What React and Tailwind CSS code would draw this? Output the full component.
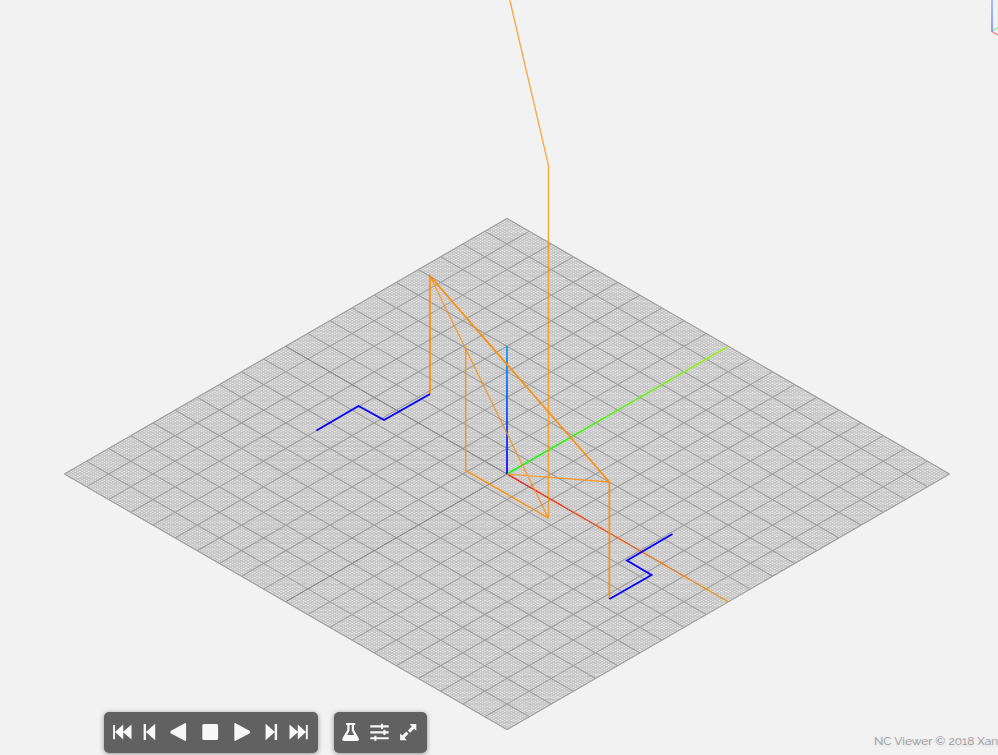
import React from "react";

const CX = 507;
const CY = 474;
const HALF_W = 442.5;
const HALF_H = 255.5;

// Isometric projection: x and y run from -1 to 1 across the work plane.
const project = (x, y) =>
  `${(CX + ((x + y) * HALF_W) / 2).toFixed(2)} ${(CY + ((x - y) * HALF_H) / 2).toFixed(2)}`;

function gridPath(divisions) {
  let d = "";
  for (let i = 0; i <= divisions; i++) {
    const t = -1 + (2 * i) / divisions;
    d += `M${project(t, -1)}L${project(t, 1)}M${project(-1, t)}L${project(1, t)}`;
  }
  return d;
}

const MINOR = gridPath(200);
const MAJOR = gridPath(20);

function Scene() {
  return (
    <svg className="absolute inset-0" width="998" height="755" viewBox="0 0 998 755" fill="none">
      <defs>
        <linearGradient id="axisX" gradientUnits="userSpaceOnUse" x1="507" y1="474" x2="728" y2="601">
          <stop stopColor="#ff0000" />
          <stop offset="1" stopColor="#ffa000" />
        </linearGradient>
        <linearGradient id="axisY" gradientUnits="userSpaceOnUse" x1="507" y1="474" x2="728" y2="346">
          <stop stopColor="#00ff00" />
          <stop offset="1" stopColor="#a0ff00" />
        </linearGradient>
        <linearGradient id="axisZ" gradientUnits="userSpaceOnUse" x1="507" y1="474" x2="507" y2="346">
          <stop stopColor="#0000ff" />
          <stop offset="1" stopColor="#00a0ff" />
        </linearGradient>
        <linearGradient id="cubeZ" gradientUnits="userSpaceOnUse" x1="992" y1="31" x2="992" y2="0">
          <stop stopColor="#8888ff" />
          <stop offset="1" stopColor="#88bbff" />
        </linearGradient>
      </defs>
      <path d={MINOR} stroke="#888888" strokeWidth="1.15" strokeOpacity="0.44" />
      <path d={MAJOR} stroke="#7d7d7d" strokeWidth="1.25" strokeOpacity="0.52" />
      <path d="M286 346.5L507 474L286 601.5" stroke="#555555" strokeOpacity="0.55" strokeDasharray="1.75 0.8" />

      <path d="M507 474L728 601.5" stroke="url(#axisX)" strokeWidth="1.3" strokeOpacity="0.3" />
      <path d="M507 474L728 601.5" stroke="url(#axisX)" strokeWidth="1.4" strokeDasharray="1.75 0.8" />
      <path d="M507 474L728 346.5" stroke="url(#axisY)" strokeWidth="1.4" strokeOpacity="0.5" />
      <path d="M507 474L728 346.5" stroke="url(#axisY)" strokeWidth="1.5" strokeDasharray="3 1" />
      <path d="M507 474V346" stroke="url(#axisZ)" strokeWidth="1.7" />

      <g stroke="#ff8c00">
        <path d="M509.8 0L548.4 165V518L430 276M507 474L609.5 482" strokeOpacity="0.75" strokeWidth="1.3" />
        <path d="M548.4 518L465.7 470.5V347" strokeOpacity="0.88" strokeWidth="1.45" />
        <path d="M430 394V276L609.4 482V599" strokeOpacity="0.95" strokeWidth="1.7" />
      </g>
      <g stroke="#0000ff" strokeWidth="1.8">
        <path d="M316.5 430.5L358.5 406L384 420L430 394" />
        <path d="M609.5 599L651.5 575L627 560.5L672.5 534" />
      </g>

      <path d="M992 31L998 27.5" stroke="#77ff77" strokeWidth="1.4" />
      <path d="M992 31.5L998 35" stroke="#ff7777" strokeWidth="1.4" />
      <path d="M992 32V0" stroke="url(#cubeZ)" strokeWidth="1.7" />
    </svg>
  );
}

function IconButton({ label, x, width, children }) {
  return (
    <button aria-label={label} className="block shrink-0">
      <svg width={width} height="41" viewBox={`${x} 712 ${width} 41`} fill="#f7f7f7" stroke="none">
        {children}
      </svg>
    </button>
  );
}

export default function App() {
  return (
    <div className="relative flex h-[755px] w-[998px] flex-col justify-end overflow-hidden bg-[#f2f2f2]">
      <Scene />
      <div className="relative mb-[2px] flex h-[41px] items-center whitespace-nowrap">
        <div className="ml-[103.5px] flex h-[41px] w-[214px] shrink-0 rounded-[5px] bg-[#616161] pl-[4.5px] shadow-[0_1px_5px_rgba(0,0,0,0.4)]">
          <IconButton label="Go to start" x={108} width={27}>
            <path d="M113.1 725h1.9v14.2h-1.9zM123.2 724.6v15l-8.2-7.5zM131.5 724.6v15l-8.7-7.5z" />
          </IconButton>
          <IconButton label="Step back" x={135} width={28}>
            <path d="M143.6 724h2.4v16h-2.4zM155.2 723.8v16.4l-9.3-8.2z" />
          </IconButton>
          <IconButton label="Play backwards" x={163} width={31}>
            <path d="M184.8 723.2Q186.1 722.8 186.1 724.2V739.9Q186.1 741.3 184.8 740.8L171 733.6Q169.2 732.1 171 730.7Z" />
          </IconButton>
          <IconButton label="Stop" x={194} width={32}>
            <rect x="202.3" y="724" width="15.8" height="16" rx="1.5" />
          </IconButton>
          <IconButton label="Play" x={226} width={31}>
            <path d="M235.6 723.2Q234.3 722.8 234.3 724.2V739.9Q234.3 741.3 235.6 740.8L249.4 733.6Q251.2 732.1 249.4 730.7Z" />
          </IconButton>
          <IconButton label="Step forward" x={257} width={28}>
            <path d="M265.6 723.8l9.3 8.2-9.3 8.2zM274.7 724h2.4v16h-2.4z" />
          </IconButton>
          <IconButton label="Go to end" x={285} width={27}>
            <path d="M289.5 724.6l8.7 7.5-8.7 7.5zM297.8 724.6l8.2 7.5-8.2 7.5zM305.9 725h1.9v14.2h-1.9z" />
          </IconButton>
        </div>
        <div className="ml-4 flex h-[41px] w-[93px] shrink-0 rounded-[5px] bg-[#616161] pl-[3.5px] shadow-[0_1px_5px_rgba(0,0,0,0.4)]">
          <IconButton label="Simulate" x={337} width={27}>
            <path
              fillRule="evenodd"
              d="M346 723h9.2v1.9h-1.2v5.1l4.6 8.1q1.1 2.9-1.5 2.9h-13q-2.6 0-1.5-2.9l4.7-8.1v-5.1H346zM349.5 724.9v5.6l-2.4 4.4h7.1l-2.4-4.4v-5.6z"
            />
          </IconButton>
          <IconButton label="Settings" x={364} width={30}>
            <path d="M370.3 725.3h18.4v2.1h-18.4zM370.3 731.3h18.4v2.1h-18.4zM370.3 737.2h18.4v2.1h-18.4z" />
            <path d="M381 723.8h2v5.1h-2zM383.4 729.8h2v5.1h-2zM374.4 735.7h2v5.1h-2z" />
          </IconButton>
          <IconButton label="Full screen" x={394} width={28}>
            <path d="M409.5 724h6.8v6.8l-2.2-2.1-4 4-2.2-2.2 4-4zM400.1 733.5l2.2 2.1 4-4 2.2 2.2-4 4 2.4 2.5h-6.8z" />
          </IconButton>
        </div>
        <div className="ml-[447.5px] mt-[16px] shrink-0 text-[12px] leading-4 text-[#999999] [font-family:Raleway,Lato,sans-serif] [text-shadow:0_1px_3px_rgba(0,0,0,0.15)]">
          NC Viewer © 2018 Xan
        </div>
      </div>
    </div>
  );
}
